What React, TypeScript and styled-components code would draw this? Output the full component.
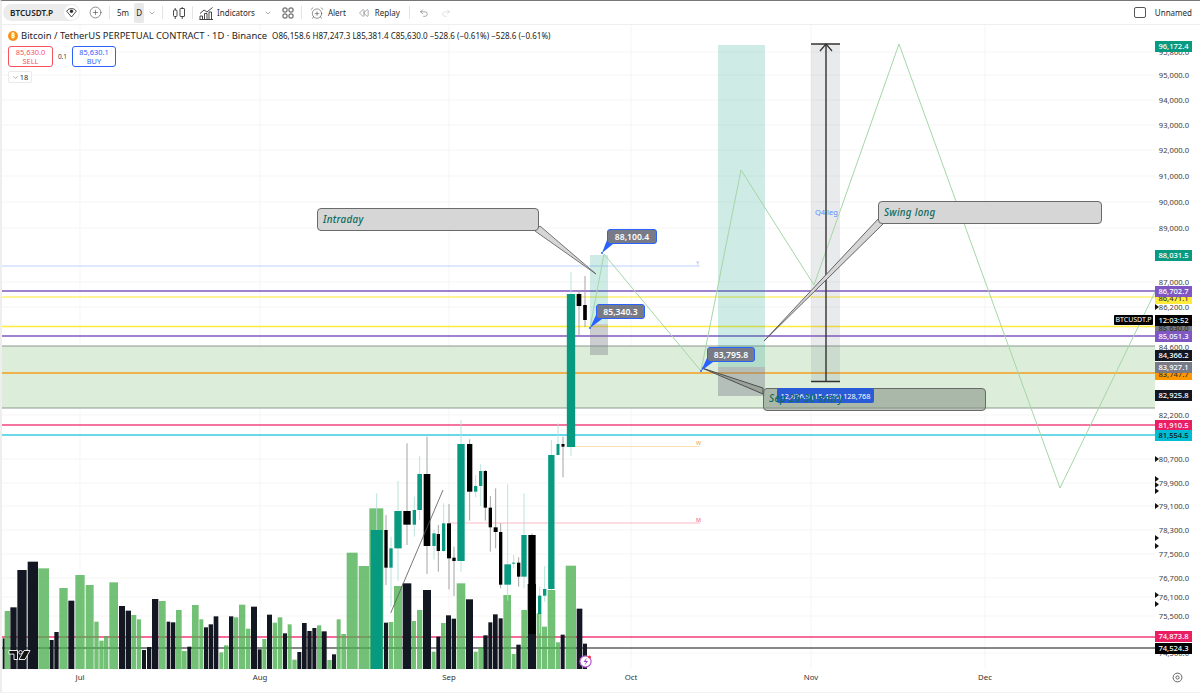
import React from "react"
import styled, { createGlobalStyle } from "styled-components"
import {
  AlarmClockPlus,
  ChevronDown,
  CirclePlus,
  Redo2,
  Rewind,
  Undo2,
} from "lucide-react"

const GlobalStyle = createGlobalStyle`
  html, body {
    margin: 0;
    padding: 0;
    background: #fff;
    overflow: hidden;
  }
  * { box-sizing: border-box; }
`

const FONT = `"Noto Sans", "Open Sans", sans-serif`

const Page = styled.div`
  width: 1200px;
  height: 693px;
  display: flex;
  flex-direction: column;
  font-family: ${FONT};
  color: #222;
  border-top: 1px solid #77787c;
  border-left: 2px solid #eeeeee;
`

/* ---------- top toolbar ---------- */

const Toolbar = styled.div`
  height: 24px;
  margin-left: -2px;
  display: flex;
  align-items: center;
  padding: 0 8px 0 3px;
  border-bottom: 1.5px solid #eeeeee;
  font-size: 8px;
  flex-shrink: 0;
`

const SymbolPill = styled.div`
  width: 77px;
  height: 17px;
  border-radius: 9px;
  background: #ececec;
  display: flex;
  align-items: center;
  padding-left: 7px;
  font-weight: 600;
  font-size: 8.2px;
  justify-content: space-between;
  padding-right: 1px;
`

const EyeBadge = styled.span`
  width: 15px;
  height: 15px;
  border-radius: 50%;
  background: #fff;
  display: flex;
  align-items: center;
  justify-content: center;
`

const ToolSep = styled.span<{ $mx: number }>`
  width: 1px;
  height: 13px;
  background: #e4e4e4;
  margin: 0 ${(p) => p.$mx}px;
`

const ToolText = styled.span<{ $ml?: number; $mr?: number }>`
  margin-left: ${(p) => p.$ml ?? 0}px;
  margin-right: ${(p) => p.$mr ?? 0}px;
  color: #2a2a2a;
  font-size: 8px;
  white-space: nowrap;
`

const IntervalActive = styled.span`
  width: 10px;
  height: 20px;
  background: #e8e8e8;
  border-radius: 2px;
  display: flex;
  align-items: center;
  justify-content: center;
  font-size: 8px;
  margin-left: 5px;
`

const ToolIcon = styled.span<{ $ml?: number; $mr?: number }>`
  display: flex;
  align-items: center;
  justify-content: center;
  margin-left: ${(p) => p.$ml ?? 0}px;
  margin-right: ${(p) => p.$mr ?? 0}px;
  color: #333;
`

const Spacer = styled.span`
  flex: 1;
`

const LayoutCheck = styled.span`
  width: 12px;
  height: 11px;
  border: 1px solid #555;
  border-radius: 2px;
  margin-right: 9px;
`

/* ---------- chart ---------- */

const ChartRow = styled.div`
  flex: 1;
  display: flex;
  min-height: 0;
`

const ChartPane = styled.div`
  position: relative;
  width: 1153px;
  height: 644px;
  flex-shrink: 0;
  overflow: hidden;
`

const ChartSvg = styled.svg`
  display: block;
  width: 1153px;
  height: 644px;
`

const Legend = styled.div`
  position: absolute;
  left: 6px;
  top: 4px;
  display: flex;
  flex-direction: column;
  align-items: flex-start;
  gap: 4px;
`

const LegendTitle = styled.div`
  display: flex;
  align-items: center;
  height: 13px;
  white-space: nowrap;
  font-size: 9.45px;
  color: #1e1e1e;
`

const CoinBadge = styled.span`
  width: 10px;
  height: 10px;
  border-radius: 50%;
  background: #f7931a;
  color: #fff;
  font-size: 7px;
  font-weight: 700;
  display: flex;
  align-items: center;
  justify-content: center;
  margin-right: 3px;
`

const Ohlc = styled.span`
  font-size: 8.05px;
  margin-left: 5px;
  color: #222;
`

const TradeRow = styled.div`
  display: flex;
  align-items: center;
  gap: 2px;
`

const TradeButton = styled.div<{ $color: string; $w: number }>`
  width: ${(p) => p.$w}px;
  height: 21px;
  border: 1px solid ${(p) => p.$color};
  border-radius: 3px;
  color: ${(p) => p.$color};
  background: #fff;
  display: flex;
  flex-direction: column;
  align-items: center;
  justify-content: center;
  font-size: 7.4px;
  line-height: 9px;
`

const TradeQty = styled.span`
  font-size: 6.5px;
  color: #444;
  width: 15px;
  text-align: center;
`

const CollapseChip = styled.div`
  width: 24px;
  height: 12px;
  border: 1px solid #eaeaea;
  border-radius: 2px;
  background: #fff;
  display: flex;
  align-items: center;
  justify-content: center;
  gap: 1px;
  font-size: 7.5px;
  color: #333;
`

const PriceCallout = styled.div.attrs<{ $x: number; $y: number; $w: number }>((p) => ({
  style: { left: p.$x, top: p.$y - 25, width: p.$w },
}))<{ $x: number; $y: number; $w: number }>`
  position: absolute;
  height: 15px;
  background: #787b86;
  border: 1px solid #2962ff;
  border-radius: 3px;
  color: #fff;
  font-size: 8.6px;
  font-weight: 600;
  display: flex;
  align-items: center;
  justify-content: center;
`

const NoteBox = styled.div.attrs<{ $x: number; $y: number; $w: number }>((p) => ({
  style: { left: p.$x, top: p.$y - 25, width: p.$w },
}))<{ $x: number; $y: number; $w: number; $fill: string }>`
  position: absolute;
  height: 23px;
  background: ${(p) => p.$fill};
  border: 1px solid #6a6a6a;
  border-radius: 4px;
  display: flex;
  align-items: center;
  padding-left: 5px;
  color: #0d6b5a;
  font-size: 9.8px;
  font-weight: 500;
  font-style: italic;
  letter-spacing: 0.3px;
`

const SepNoteText = styled.span`
  position: absolute;
  left: 767px;
  top: 366px;
  color: #0d6b5a;
  font-size: 10px;
  line-height: 14px;
  font-weight: 500;
  font-style: italic;
  letter-spacing: 0.3px;
  white-space: nowrap;
`

const MeasureLabel = styled.div`
  position: absolute;
  left: 775px;
  top: 363px;
  width: 97px;
  height: 15px;
  background: #2a5bd7;
  border-radius: 2px;
  color: #fff;
  font-size: 7.4px;
  display: flex;
  align-items: center;
  justify-content: center;
  white-space: nowrap;
`

const Q4Label = styled.span`
  position: absolute;
  left: 813px;
  top: 182px;
  font-size: 7.5px;
  line-height: 10px;
  color: #5b8cff;
`

const LevelLetter = styled.span.attrs<{ $y: number }>((p) => ({
  style: { top: p.$y - 25 },
}))<{ $y: number; $color: string }>`
  position: absolute;
  left: 694px;
  font-size: 5.5px;
  line-height: 7px;
  color: ${(p) => p.$color};
`

/* ---------- price axis ---------- */

const PriceAxis = styled.div`
  position: relative;
  width: 45px;
  height: 644px;
  flex-shrink: 0;
`

const AxisTick = styled.span.attrs<{ $y: number }>((p) => ({
  style: { top: p.$y - 25 - 6 },
}))<{ $y: number }>`
  position: absolute;
  right: 11px;
  height: 12px;
  line-height: 12px;
  font-size: 7.6px;
  color: #3c3c3c;
`

const AxisTag = styled.span.attrs<{ $y: number }>((p) => ({
  style: { top: p.$y - 25 - 5.5 },
}))<{ $y: number; $bg: string; $fg: string }>`
  position: absolute;
  left: 0;
  width: 37px;
  height: 11px;
  background: ${(p) => p.$bg};
  color: ${(p) => p.$fg};
  font-size: 7.6px;
  line-height: 11px;
  text-align: center;
  font-weight: 500;
`

const SymbolTag = styled.span`
  position: absolute;
  left: -41px;
  top: 290px;
  width: 39px;
  height: 10px;
  background: #000;
  border-radius: 1px;
  color: #fff;
  font-size: 7px;
  line-height: 10px;
  text-align: center;
`

const FlagMark = styled.span.attrs<{ $y: number }>((p) => ({
  style: { top: p.$y - 25 - 3 },
}))<{ $y: number }>`
  position: absolute;
  left: 0;
  width: 0;
  height: 0;
  border-left: 4px solid #111;
  border-top: 3px solid transparent;
  border-bottom: 3px solid transparent;
`

/* ---------- time axis ---------- */

const TimeAxis = styled.div`
  position: relative;
  height: 24px;
  flex-shrink: 0;
  border-bottom: 1px solid #f2f2f2;
`

const TimeLabel = styled.span.attrs<{ $x: number }>((p) => ({
  style: { left: p.$x - 2 },
}))<{ $x: number }>`
  position: absolute;
  top: 2px;
  transform: translateX(-50%);
  font-size: 7.8px;
  line-height: 12px;
  color: #333;
`

const AxisGear = styled.span`
  position: absolute;
  left: 1170px;
  top: 3px;
  width: 11px;
  height: 11px;
  display: flex;
`

/* ---------- data, in screen coordinates ---------- */

type Vol = [number, number, number, "b" | "g"]

// July to August, read off at 3x
const volumesA: Vol[] = [
  [8, 14, 415, "b"], [14, 30, 333, "g"], [31, 50, 322, "b"], [52, 80, 210, "b"], [83, 114, 185, "b"],
  [115, 147, 205, "g"], [149, 161, 420, "b"], [163, 176, 396, "b"], [178, 203, 264, "g"], [205, 223, 302, "b"],
  [226, 254, 225, "g"], [257, 281, 255, "g"], [283, 296, 365, "g"], [298, 311, 422, "g"], [312, 325, 408, "g"],
  [328, 354, 247, "g"], [357, 375, 318, "b"], [377, 393, 332, "b"], [394, 409, 345, "g"], [411, 423, 358, "g"],
  [426, 438, 450, "b"], [441, 454, 441, "b"], [456, 475, 297, "b"], [477, 497, 303, "g"], [500, 511, 365, "b"],
  [513, 526, 367, "b"], [528, 545, 330, "g"], [546, 560, 453, "g"], [562, 574, 440, "b"], [576, 596, 315, "g"],
  [598, 610, 358, "g"], [612, 624, 382, "b"], [626, 639, 373, "b"], [641, 655, 349, "b"], [658, 670, 457, "g"],
  [672, 685, 436, "g"], [687, 700, 349, "b"], [702, 715, 352, "g"], [717, 736, 314, "g"], [738, 751, 386, "g"],
  [753, 771, 320, "b"], [773, 785, 448, "b"], [787, 799, 417, "g"], [801, 816, 344, "b"], [818, 831, 368, "g"],
  [833, 847, 352, "g"], [849, 861, 400, "b"], [863, 875, 373, "g"], [877, 890, 479, "g"], [892, 904, 456, "b"],
  [906, 920, 369, "b"], [922, 935, 393, "b"], [937, 949, 384, "b"], [951, 960, 376, "g"],
]

// August to September
const volumesB: Vol[] = [
  [0, 4, 616, "g"], [5, 20, 634, "b"], [22, 35, 720, "g"], [36, 48, 703, "b"], [50, 62, 598, "g"],
  [64, 78, 642, "g"], [80, 113, 398, "g"], [116, 147, 438, "g"], [148, 190, 265, "g"], [192, 204, 608, "b"],
  [206, 220, 606, "g"], [222, 246, 498, "g"], [248, 274, 490, "b"], [276, 288, 603, "g"], [291, 307, 570, "g"],
  [309, 333, 510, "b"], [335, 347, 695, "g"], [349, 361, 650, "b"], [363, 377, 609, "g"], [378, 393, 586, "b"],
  [395, 408, 596, "b"], [410, 436, 490, "g"], [438, 459, 538, "b"], [461, 473, 695, "g"], [475, 489, 682, "g"],
  [490, 503, 646, "b"], [505, 517, 607, "b"], [519, 533, 583, "b"], [536, 548, 595, "b"], [550, 573, 525, "g"],
  [575, 587, 702, "g"], [589, 602, 674, "b"], [604, 621, 570, "g"], [623, 648, 492, "b"], [650, 664, 580, "g"],
  [666, 681, 620, "g"], [683, 706, 510, "g"], [708, 720, 667, "g"], [722, 734, 644, "b"], [737, 768, 437, "g"],
  [770, 787, 566, "b"], [789, 801, 671, "b"],
]

// cx, width, bodyTop, bodyBottom, wickTop, wickBottom, colour
type Candle = [number, number, number, number, number, number, "b" | "g"]

const candles: Candle[] = [
  [170, 36, 330, 750, 220, 750, "g"], [198, 10, 330, 443, 285, 495, "b"], [213, 10, 385, 443, 350, 560, "g"],
  [234, 22, 273, 385, 183, 482, "g"], [261, 22, 273, 314, 70, 375, "b"], [283, 10, 270, 314, 230, 350, "g"],
  [299, 14, 162, 270, 108, 300, "g"], [321, 20, 162, 378, 50, 462, "b"], [342, 10, 340, 378, 330, 418, "g"],
  [355, 10, 342, 393, 315, 455, "b"], [371, 10, 310, 393, 250, 395, "g"], [387, 12, 310, 415, 252, 508, "b"],
  [402, 10, 413, 423, 380, 528, "b"], [423, 22, 72, 423, 0, 455, "g"], [449, 16, 72, 215, 58, 302, "b"],
  [467, 10, 198, 215, 165, 232, "g"], [482, 10, 153, 198, 133, 258, "g"], [496, 10, 153, 263, 150, 302, "b"],
  [511, 10, 263, 322, 228, 395, "b"], [527, 12, 322, 336, 205, 385, "b"], [542, 10, 336, 494, 310, 505, "b"],
  [563, 20, 433, 494, 193, 542, "g"], [581, 10, 428, 431, 405, 445, "g"], [596, 10, 428, 470, 412, 500, "b"],
  [612, 16, 345, 470, 220, 505, "g"], [636, 22, 345, 642, 340, 642, "b"], [659, 10, 527, 582, 500, 640, "g"],
  [674, 10, 507, 527, 438, 545, "g"], [694, 19, 105, 507, 60, 510, "g"], [714, 9, 72, 105, 10, 106, "g"],
  [729, 9, 72, 80, 50, 172, "b"], [753, 25, -378, 81, -444, 108, "g"], [777, 14, -378, -342, -390, -255, "b"],
  [795, 11, -345, -300, -432, -279, "b"],
]

const hLines: [number, string, number][] = [
  [291, "#7e57c2", 1.4],
  [297, "#fff176", 1.6],
  [326.5, "#ffeb3b", 1.4],
  [336, "#7e57c2", 1.4],
  [373, "#f59d1c", 1.4],
  [425, "#f0457f", 1.5],
  [435, "#36cde2", 1.5],
  [637, "#f23a78", 1.3],
  [648, "#111111", 1.2],
]

const gridY = [52, 75, 100, 125, 150, 176, 202, 228, 282, 307, 347, 415, 459, 483, 506, 530, 554, 578, 597, 616, 653]
const gridX = [80, 260, 449, 631, 811, 985]

const ticks: [number, string][] = [
  [52, "95,800.0"], [75, "95,000.0"], [100, "94,000.0"], [125, "93,000.0"], [150, "92,000.0"], [176, "91,000.0"],
  [202, "90,000.0"], [228, "89,000.0"], [282, "87,000.0"], [307, "86,200.0"], [347, "84,600.0"], [415, "82,200.0"],
  [459, "80,700.0"], [483, "79,900.0"], [506, "79,100.0"], [530, "78,300.0"], [554, "77,500.0"], [578, "76,700.0"],
  [597, "76,100.0"], [616, "75,500.0"], [653, "74,500.0"],
]

const tags: [number, string, string, string][] = [
  [46.5, "96,172.4", "#089981", "#fff"],
  [255, "88,031.5", "#089981", "#fff"],
  [298, "86,471.1", "#ffeb3b", "#333"],
  [291, "86,702.7", "#7e57c2", "#fff"],
  [328, "85,630.0", "#787b86", "#333"],
  [320, "12:03:52", "#000", "#fff"],
  [336, "85,051.3", "#7e57c2", "#fff"],
  [355, "84,366.2", "#131722", "#fff"],
  [374, "83,747.7", "#ff9800", "#333"],
  [367, "83,927.1", "#787b86", "#fff"],
  [395, "82,925.8", "#131722", "#fff"],
  [425, "81,910.5", "#e91e63", "#fff"],
  [435, "81,554.5", "#00bcd4", "#111"],
  [636, "74,873.8", "#e91e63", "#fff"],
  [648, "74,524.3", "#000", "#fff"],
]

const flags = [307, 459, 479, 485, 491, 506, 538, 546, 595, 604]

const months: [number, string][] = [
  [80, "Jul"], [260, "Aug"], [449, "Sep"], [631, "Oct"], [811, "Nov"], [985, "Dec"],
]

const VolumeBars = ({ data, ox, oy }: { data: Vol[]; ox: number; oy: number }) => (
  <>
    {data.map(([x0, x1, top, c], i) => {
      const y = oy + top / 3
      return (
        <rect
          key={i}
          x={ox + x0 / 3}
          y={y}
          width={(x1 - x0) / 3}
          height={669 - y}
          fill={c === "g" ? "#4caf50" : "#131722"}
          fillOpacity={c === "g" ? 0.78 : 1}
        />
      )
    })}
  </>
)

const CandleBars = () => (
  <>
    {candles.map(([cx, w, t, b, wt, wb, c], i) => {
      const x = 320 + cx / 3
      const color = c === "g" ? "#089981" : "#000"
      return (
        <g key={i}>
          <line
            x1={x}
            x2={x}
            y1={420 + wt / 3}
            y2={420 + wb / 3}
            stroke={c === "g" ? "#b2dfd8" : "#9a9a9a"}
            strokeWidth={0.9}
          />
          <rect x={x - w / 6} y={420 + t / 3} width={w / 3} height={(b - t) / 3} fill={color} />
        </g>
      )
    })}
  </>
)

const TvLogo = () => (
  <g transform="translate(9 650.5)" stroke="#fff" strokeWidth={0.9} fill="#111">
    <path d="M0 0h8.5v9H5V3.6H0z" />
    <circle cx="11.5" cy="1.8" r="1.8" />
    <path d="M15 0h6l-5 9h-6z" />
  </g>
)

const Chart = () => (
  <ChartSvg viewBox="2 25 1153 644" preserveAspectRatio="none">
    {gridY.map((y) => (
      <line key={y} x1={0} x2={1155} y1={y} y2={y} stroke="#f5f5f5" strokeWidth={1} />
    ))}
    {gridX.map((x) => (
      <line key={x} x1={x} x2={x} y1={25} y2={669} stroke="#f5f5f5" strokeWidth={1} />
    ))}

    <rect x={0} y={346} width={1155} height={62} fill="#dcedda" />
    <line x1={0} x2={1155} y1={346} y2={346} stroke="#8d9a8d" strokeWidth={1} />
    <line x1={0} x2={1155} y1={408} y2={408} stroke="#8d9a8d" strokeWidth={1} />

    <line x1={0} x2={700} y1={266} y2={266} stroke="#bcd2ff" strokeWidth={1} />
    <line x1={575} x2={700} y1={446.5} y2={446.5} stroke="#fbe0b8" strokeWidth={1.2} />
    <line x1={450} x2={700} y1={523} y2={523} stroke="#f9b9c4" strokeWidth={1} />

    {hLines.map(([y, color, w]) => (
      <line key={y} x1={0} x2={1155} y1={y} y2={y} stroke={color} strokeWidth={w} />
    ))}

    <rect x={590} y={255} width={18} height={69} fill="#089981" fillOpacity={0.2} />
    <rect x={590} y={324} width={18} height={31} fill="#787b86" fillOpacity={0.38} />
    <rect x={718} y={45} width={47} height={322} fill="#089981" fillOpacity={0.2} />
    <rect x={718} y={367} width={47} height={29} fill="#787b86" fillOpacity={0.4} />
    <rect x={811} y={44} width={29} height={338} fill="#787b86" fillOpacity={0.16} />

    <VolumeBars data={volumesA} ox={0} oy={500} />
    <VolumeBars data={volumesB} ox={320} oy={420} />
    <CandleBars />

    <line x1={390.7} y1={613} x2={443} y2={490} stroke="#555" strokeWidth={0.8} />

    <polyline
      points="590,328 604,254 701,371 741,170 814,285 899,44 1060,488 1155,292"
      fill="none"
      stroke="#a5d6a7"
      strokeWidth={1}
    />

    <path d="M826 44V381M811 44H840M811 381.5H840" stroke="#333" strokeWidth={1.4} fill="none" />
    <path d="M820 51L826 44L832 51" stroke="#333" strokeWidth={1.2} fill="none" />

    <polygon points="535,231 540,226 596,274" fill="#d6d6d6" stroke="#666" strokeWidth={0.9} />
    <polygon points="879,218 884,223 764,341" fill="#d6d6d6" stroke="#555" strokeWidth={0.9} />
    <polygon points="702,368 763,388 763,394" fill="#9aa39a" stroke="#444" strokeWidth={0.9} />

    <polygon points="607,240 613,244 602,253" fill="#2962ff" />
    <polygon points="596,315 602,319 590,328" fill="#2962ff" />
    <polygon points="707,358 713,362 701,371" fill="#2962ff" />
    <circle cx={602} cy={253} r={1} fill="#2962ff" />
    <circle cx={590} cy={328} r={1} fill="#2962ff" />
    <circle cx={701} cy={371} r={1} fill="#2962ff" />

    <TvLogo />

    <circle cx={585.5} cy={661.5} r={5.6} fill="#fff" stroke="#b65ad2" strokeWidth={1.2} />
    <path d="M587 657.5L583.5 662H586L584.5 665.5L588 661H585.5Z" fill="#a33cc9" />
    <circle cx={589.5} cy={657} r={1.5} fill="#f23645" />
  </ChartSvg>
)

const CandleIcon = () => (
  <svg width="14" height="14" viewBox="0 0 14 14" fill="none" stroke="#333" strokeWidth="0.9">
    <rect x="1.5" y="4" width="3.5" height="6.5" rx="1" />
    <path d="M3.2 2v2M3.2 10.5V13" />
    <rect x="8" y="2.5" width="4.5" height="8" rx="0.5" />
    <path d="M10.2 1v1.5M10.2 10.5V13" />
  </svg>
)

const IndicatorsIcon = () => (
  <svg width="15" height="14" viewBox="0 0 15 14" fill="none" stroke="#333" strokeWidth="0.9">
    <path d="M1 7.5L5 4L8 6L13.5 1.5" />
    <path d="M1 13.5V10H3.5V13.5M5.5 13.5V7.5H8V13.5M10 13.5V6H12.5V13.5M0.5 13.5H14" />
  </svg>
)

const GridIcon = () => (
  <svg width="12" height="12" viewBox="0 0 12 12" fill="none" stroke="#333" strokeWidth="0.9">
    <rect x="1" y="1" width="4" height="4" rx="1" />
    <rect x="7" y="1" width="4" height="4" rx="1" />
    <rect x="1" y="7" width="4" height="4" rx="1" />
    <rect x="7" y="7" width="4" height="4" rx="1" />
  </svg>
)

const EyeIcon = () => (
  <svg width="11" height="10" viewBox="0 0 11 10" fill="none" stroke="#222" strokeWidth="0.8">
    <path d="M0.7 3.2C2 1.2 3.6 0.6 5.5 0.6S9 1.2 10.3 3.2L5.5 9Z" />
    <circle cx="5.5" cy="3.3" r="1.3" fill="#222" />
  </svg>
)

const GearIcon = () => (
  <svg width="11" height="11" viewBox="0 0 11 11" fill="none" stroke="#555" strokeWidth="0.9">
    <circle cx="5.5" cy="5.5" r="4.4" />
    <circle cx="5.5" cy="5.5" r="1.6" />
  </svg>
)

const App = () => (
  <>
    <GlobalStyle />
    <Page>
      <Toolbar>
        <SymbolPill>
          BTCUSDT.P
          <EyeBadge>
            <EyeIcon />
          </EyeBadge>
        </SymbolPill>
        <ToolIcon $ml={9}>
          <CirclePlus size={13} strokeWidth={1} />
        </ToolIcon>
        <ToolSep $mx={7} />
        <ToolText>5m</ToolText>
        <IntervalActive>D</IntervalActive>
        <ToolIcon $ml={4}>
          <ChevronDown size={8} strokeWidth={1.2} />
        </ToolIcon>
        <ToolSep $mx={6} />
        <ToolIcon $ml={2.5}>
          <CandleIcon />
        </ToolIcon>
        <ToolSep $mx={6} />
        <ToolIcon>
          <IndicatorsIcon />
        </ToolIcon>
        <ToolText $ml={3.5}>Indicators</ToolText>
        <ToolIcon $ml={9}>
          <ChevronDown size={8} strokeWidth={1.2} />
        </ToolIcon>
        <ToolIcon $ml={10}>
          <GridIcon />
        </ToolIcon>
        <ToolSep $mx={7} />
        <ToolIcon $ml={1}>
          <AlarmClockPlus size={14} strokeWidth={0.9} />
        </ToolIcon>
        <ToolText $ml={4}>Alert</ToolText>
        <ToolIcon $ml={13}>
          <Rewind size={10} strokeWidth={1} />
        </ToolIcon>
        <ToolText $ml={6}>Replay</ToolText>
        <ToolSep $mx={9} />
        <ToolIcon>
          <Undo2 size={10} strokeWidth={1} />
        </ToolIcon>
        <ToolIcon $ml={12}>
          <Redo2 size={10} strokeWidth={1} color="#b8b8b8" />
        </ToolIcon>
        <Spacer />
        <LayoutCheck />
        <ToolText>Unnamed</ToolText>
      </Toolbar>

      <ChartRow>
        <ChartPane>
          <Chart />

          <PriceCallout $x={605} $y={229} $w={50}>88,100.4</PriceCallout>
          <PriceCallout $x={594} $y={304} $w={49}>85,340.3</PriceCallout>
          <PriceCallout $x={705} $y={347} $w={48}>83,795.8</PriceCallout>

          <NoteBox $x={315} $y={208} $w={222} $fill="#d6d6d6">Intraday</NoteBox>
          <NoteBox $x={876} $y={201} $w={224} $fill="#d6d6d6">Swing long</NoteBox>
          <NoteBox $x={761} $y={388} $w={223} $fill="rgba(130,140,130,0.55)" />
          <MeasureLabel>12,876.9 (15.43%) 128,768</MeasureLabel>
          <SepNoteText>Sep 26-30 entry</SepNoteText>
          <Q4Label>Q4 leg</Q4Label>

          <LevelLetter $y={260} $color="#93aee8">Y</LevelLetter>
          <LevelLetter $y={440} $color="#f2a33a">W</LevelLetter>
          <LevelLetter $y={517} $color="#e85a7a">M</LevelLetter>

          <Legend>
            <LegendTitle>
              <CoinBadge>₿</CoinBadge>
              Bitcoin / TetherUS PERPETUAL CONTRACT · 1D · Binance
              <Ohlc>O86,158.6 H87,247.3 L85,381.4 C85,630.0 −528.6 (−0.61%) −528.6 (−0.61%)</Ohlc>
            </LegendTitle>
            <TradeRow>
              <TradeButton $color="#f7525f" $w={45}>
                <span>85,630.0</span>
                <span>SELL</span>
              </TradeButton>
              <TradeQty>0.1</TradeQty>
              <TradeButton $color="#2962ff" $w={44}>
                <span>85,630.1</span>
                <span>BUY</span>
              </TradeButton>
            </TradeRow>
            <CollapseChip>
              <ChevronDown size={7} strokeWidth={1.4} />
              18
            </CollapseChip>
          </Legend>
        </ChartPane>

        <PriceAxis>
          {ticks.map(([y, t]) => (
            <AxisTick key={y} $y={y}>{t}</AxisTick>
          ))}
          {flags.map((y) => (
            <FlagMark key={y} $y={y} />
          ))}
          {tags.map(([y, t, bg, fg]) => (
            <AxisTag key={t} $y={y} $bg={bg} $fg={fg}>{t}</AxisTag>
          ))}
          <SymbolTag>BTCUSDT.P</SymbolTag>
        </PriceAxis>
      </ChartRow>

      <TimeAxis>
        {months.map(([x, m]) => (
          <TimeLabel key={m} $x={x}>{m}</TimeLabel>
        ))}
        <AxisGear>
          <GearIcon />
        </AxisGear>
      </TimeAxis>
    </Page>
  </>
)

export default App
